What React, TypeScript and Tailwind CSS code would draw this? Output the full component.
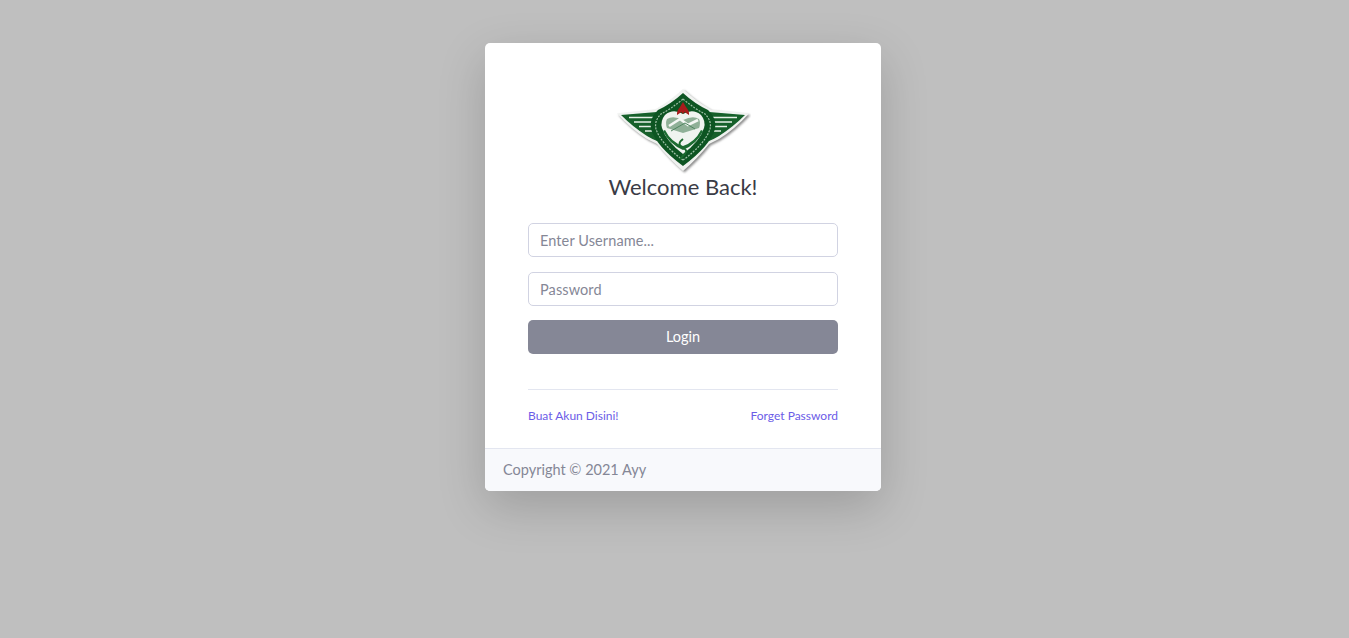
// one side of the badge, the other side is the same thing mirrored
const LogoHalf = () => (
  <>
    <path d="M6 31 L42 28 L42 57 Q37 55 32 52 Q18 43 6 31 Z" fill="#14602a" />
    <path d="M14 33.5 H40 M19 38 H40 M24 42.5 H40 M30 47 H40" stroke="#e6efe7" strokeWidth="1.4" />
    <path d="M68 9 Q56 20 43 26 Q34 34 36 45 Q41 62 68 82 Z" fill="#0e5424" />
    <path d="M68 15 Q56 25 46 30 Q39 37 41 45 Q46 60 68 76" fill="none" stroke="#9fc2a6" strokeWidth="1.2" strokeDasharray="2 1.2" />
    <path d="M68 30 Q58 24 50 31 Q45 37 47 44 Q51 57 68 70 Z" fill="#f0f4f0" />
    <path d="M68 36 Q58 31 52 35 Q50 39 52 44 L68 49 Z" fill="#8fb097" />
    <path d="M50 46 Q56 58 68 62 L68 66 Q54 60 48 47 Z" fill="#1d6d32" />
  </>
);

const Logo = () => (
  <svg width="136" height="90" viewBox="0 0 136 90" className="block">
    <defs>
      <filter id="halo" x="-10%" y="-10%" width="120%" height="120%">
        <feGaussianBlur stdDeviation="1.3" />
      </filter>
      <filter id="scan" x="-5%" y="-5%" width="110%" height="110%">
        <feGaussianBlur stdDeviation="0.35" />
      </filter>
      <path id="outline" d="M2 29.5 L40 25.5 Q54 18 68 5 Q82 18 96 25.5 L134 29.5 Q120 45 104 55 L94 60 Q82 75 68 87 Q54 75 42 60 L32 55 Q16 45 2 29.5 Z" />
    </defs>
    <use href="#outline" fill="#8d8d8d" filter="url(#halo)" transform="translate(1.5 1.5)" />
    <use href="#outline" fill="#f0f2f0" />
    <g filter="url(#scan)">
      <LogoHalf />
      <g transform="translate(136 0) scale(-1 1)">
        <LogoHalf />
      </g>
      {/* middle of the shield */}
      <path d="M54 42 L65 35 L73 41 L83 36" stroke="#f4f7f4" strokeWidth="2.6" fill="none" />
      <path d="M56 47 L70 39 L80 45" stroke="#4f8560" strokeWidth="1" fill="none" />
      <path d="M68 55 Q61 60 68 64 Q75 67 67 72 M65 75 L70 70" stroke="#1b6a2e" strokeWidth="1.9" fill="none" />
      <path d="M68 18 L71 23 Q74.5 27 74 31 L69.5 28 L68 30 L66.5 28 L62 31 Q61.5 27 65 23 Z" fill="#a81a1a" />
    </g>
  </svg>
);

export default function App() {
  return (
    <div className="flex min-h-[638px] justify-center bg-[#bfbfbf] pt-[43px] pl-[17px] font-['Lato','Noto_Sans',sans-serif]">
      <div className="h-[448px] w-[396px] overflow-hidden rounded-[5px] bg-white shadow-[0_16px_48px_rgba(0,0,0,0.175)]">
        <div className="flex h-[405px] flex-col px-[43px] pt-[41px]">
          <div className="flex flex-col items-center">
            <Logo />
            <h1 className="-mt-[1px] text-[22px] leading-[27px] font-normal text-[#3a3b45]">Welcome Back!</h1>
          </div>
          <form className="mt-[23px] flex flex-col">
            <input
              placeholder="Enter Username..."
              className="h-[34px] w-full rounded-[5px] border border-[#d1d3e2] px-[11px] text-[14.5px] tracking-[0.1px] text-[#6e707e] outline-none placeholder:text-[#858796]"
            />
            <input
              placeholder="Password"
              className="mt-[15px] h-[34px] w-full rounded-[5px] border border-[#d1d3e2] px-[11px] text-[14.5px] tracking-[0.1px] text-[#6e707e] outline-none placeholder:text-[#858796]"
            />
            <button type="button" className="mt-[14px] h-[34px] w-full rounded-[5px] bg-[#858796] text-[14.5px] text-white">
              Login
            </button>
          </form>
          <hr className="mt-[35px] border-[#e3e6f0]" />
          <div className="mt-[18px] flex items-center justify-between text-[12px] leading-[16px] text-[#6b5ce7]">
            <a href="#">Buat Akun Disini!</a>
            <a href="#">Forget Password</a>
          </div>
        </div>
        <div className="flex h-[43px] items-center border-t border-[#e3e6f0] bg-[#f8f9fc] px-[18px] text-[14.5px] text-[#858796]">
          Copyright © 2021 Ayy
        </div>
      </div>
    </div>
  );
}
